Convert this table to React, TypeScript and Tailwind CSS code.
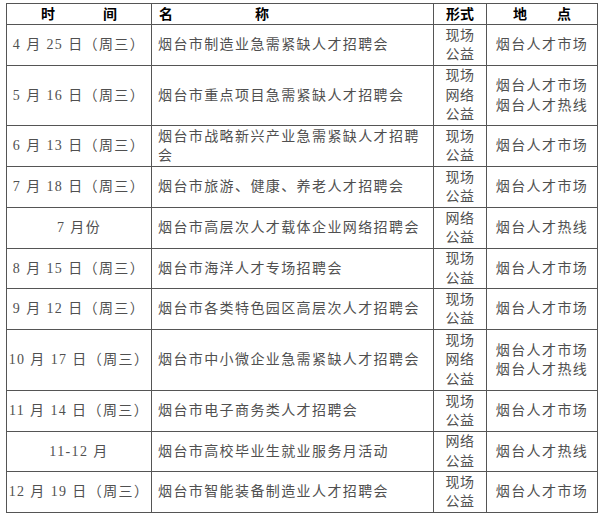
const rows: { date: string; name: string; form: string[]; place: string[]; h: string }[] = [
  { date: "4 月 25 日（周三）", name: "烟台市制造业急需紧缺人才招聘会", form: ["现场", "公益"], place: ["烟台人才市场"], h: "h-[41px]" },
  { date: "5 月 16 日（周三）", name: "烟台市重点项目急需紧缺人才招聘会", form: ["现场", "网络", "公益"], place: ["烟台人才市场", "烟台人才热线"], h: "h-[60px]" },
  { date: "6 月 13 日（周三）", name: "烟台市战略新兴产业急需紧缺人才招聘会", form: ["现场", "公益"], place: ["烟台人才市场"], h: "h-[41px]" },
  { date: "7 月 18 日（周三）", name: "烟台市旅游、健康、养老人才招聘会", form: ["现场", "公益"], place: ["烟台人才市场"], h: "h-[41px]" },
  { date: "7 月份", name: "烟台市高层次人才载体企业网络招聘会", form: ["网络", "公益"], place: ["烟台人才热线"], h: "h-[41px]" },
  { date: "8 月 15 日（周三）", name: "烟台市海洋人才专场招聘会", form: ["现场", "公益"], place: ["烟台人才市场"], h: "h-[40px]" },
  { date: "9 月 12 日（周三）", name: "烟台市各类特色园区高层次人才招聘会", form: ["现场", "公益"], place: ["烟台人才市场"], h: "h-[41px]" },
  { date: "10 月 17 日（周三）", name: "烟台市中小微企业急需紧缺人才招聘会", form: ["现场", "网络", "公益"], place: ["烟台人才市场", "烟台人才热线"], h: "h-[61px]" },
  { date: "11 月 14 日（周三）", name: "烟台市电子商务类人才招聘会", form: ["现场", "公益"], place: ["烟台人才市场"], h: "h-[41px]" },
  { date: "11-12 月", name: "烟台市高校毕业生就业服务月活动", form: ["网络", "公益"], place: ["烟台人才热线"], h: "h-[40px]" },
  { date: "12 月 19 日（周三）", name: "烟台市智能装备制造业人才招聘会", form: ["现场", "公益"], place: ["烟台人才市场"], h: "h-[41px]" },
];

const font = "font-['Liberation_Serif','Noto_Sans_CJK_SC',serif]";

export default function App() {
  return (
    <div className={`bg-white pl-[6px] pt-[3px] ${font}`}>
      <table className="w-[591px] table-fixed border-collapse border border-[#555] text-[14px]">
        <colgroup>
          <col className="w-[145px]" />
          <col className="w-[282px]" />
          <col className="w-[53px]" />
          <col className="w-[111px]" />
        </colgroup>
        <thead>
          <tr className="h-[21px] font-bold text-black leading-[19px]">
            <th className="border border-[#555] p-0">
              <div className="flex justify-center gap-[48px]">
                <span>时</span>
                <span>间</span>
              </div>
            </th>
            <th className="border border-[#555] p-0 pl-[7px]">
              <div className="flex gap-[82px]">
                <span>名</span>
                <span>称</span>
              </div>
            </th>
            <th className="border border-[#555] p-0">形式</th>
            <th className="border border-[#555] p-0">
              <div className="flex justify-center gap-[30px]">
                <span>地</span>
                <span>点</span>
              </div>
            </th>
          </tr>
        </thead>
        <tbody className="text-[#505050] tracking-[1.4px] leading-[19.5px]">
          {rows.map((r) => (
            <tr key={r.date} className={r.h}>
              <td className="border border-[#555] p-0 text-center align-middle">{r.date}</td>
              <td className="border border-[#555] py-0 pl-[6px] pr-[6px] align-middle">{r.name}</td>
              <td className="border border-[#555] p-0 text-center align-middle tracking-[0.5px]">
                {r.form.map((f) => (
                  <div key={f}>{f}</div>
                ))}
              </td>
              <td className="border border-[#555] p-0 text-center align-middle">
                {r.place.map((p) => (
                  <div key={p}>{p}</div>
                ))}
              </td>
            </tr>
          ))}
        </tbody>
      </table>
    </div>
  );
}
